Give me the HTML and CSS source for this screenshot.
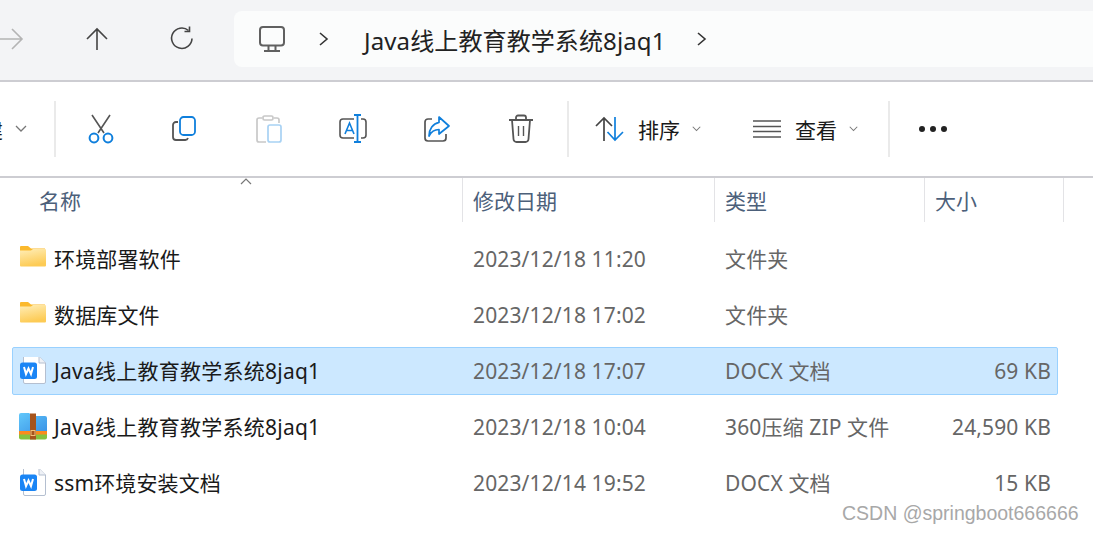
FILE: index.html
```html
<!DOCTYPE html>
<html lang="zh-CN">
<head>
  <meta charset="UTF-8">
  <meta name="viewport" content="width=device-width, initial-scale=1.0">
  <title>Java线上教育教学系统8jaq1</title>
  <link rel="stylesheet" href="styles.css">
</head>
<body>
  <!-- 地址栏 -->
  <div class="nav-bar">
    <div class="nav-btns">
      <button class="nav-btn">
        <svg width="32" height="32" viewBox="0 0 32 32" fill="none" stroke="#b4b4b4" stroke-width="1.6"><path d="M4 16H25M16 6L26 16L16 26"/></svg>
      </button>
      <button class="nav-btn">
        <svg width="32" height="32" viewBox="0 0 32 32" fill="none" stroke="#444" stroke-width="1.6"><path d="M16 27V6M6 16L16 6L26 16"/></svg>
      </button>
      <button class="nav-btn">
        <svg width="32" height="32" viewBox="0 0 32 32" fill="none" stroke="#444" stroke-width="1.6"><path d="M22.5 7.5A10.2 10.2 0 1 0 26 15.5"/><path d="M23.5 3.5V8.5H18.5"/></svg>
      </button>
    </div>
    <div class="address">
      <svg class="addr-pc" width="28" height="28" viewBox="0 0 28 28" fill="none" stroke="#606060" stroke-width="2"><rect x="2" y="2" width="24" height="18.5" rx="3"/><path d="M10.5 21V25M17.5 21V25M6 26H22"/></svg>
      <svg class="addr-chev" width="12" height="16" viewBox="0 0 12 16" fill="none" stroke="#333" stroke-width="1.6"><path d="M2 2L9 8L2 14"/></svg>
      <span class="addr-text">Java线上教育教学系统8jaq1</span>
      <svg class="addr-chev2" width="12" height="16" viewBox="0 0 12 16" fill="none" stroke="#333" stroke-width="1.6"><path d="M2 2L9 8L2 14"/></svg>
    </div>
  </div>

  <!-- 工具栏 -->
  <div class="toolbar">
    <div class="tb-new">
      <span class="tb-new-text">新建</span>
      <svg class="chev" width="12" height="8" viewBox="0 0 12 8" fill="none" stroke="#777" stroke-width="1.3"><path d="M1 1L6 6L11 1"/></svg>
    </div>
    <div class="sep"></div>
    <div class="tb-icons">
      <button class="tb-btn">
        <svg width="30" height="32" viewBox="0 0 30 32" fill="none" stroke-width="2"><path d="M6 2L18 20M24 2L12 20" stroke="#555" stroke-width="1.6"/><circle cx="8" cy="25" r="4.4" stroke="#0f7fdc"/><circle cx="22" cy="25" r="4.4" stroke="#0f7fdc"/></svg>
      </button>
      <button class="tb-btn">
        <svg width="28" height="28" viewBox="0 0 28 28" fill="none" stroke-width="1.8"><path d="M7 7H5A3 3 0 0 0 2 10V22A3 3 0 0 0 5 25H14A3 3 0 0 0 17 23" stroke="#555"/><rect x="9" y="2" width="15" height="18" rx="3.5" stroke="#0f7fdc"/></svg>
      </button>
      <button class="tb-btn">
        <svg width="28" height="30" viewBox="0 0 28 30" fill="none" stroke-width="1.7"><path d="M7 4H4A2 2 0 0 0 2 6V26A2 2 0 0 0 4 28H11M19 4H22A2 2 0 0 1 24 6V9" stroke="#c8c8c8"/><rect x="8" y="2" width="10" height="4" rx="1.5" stroke="#c8c8c8"/><rect x="13" y="11" width="13" height="17" rx="2" stroke="#a8d2f4"/></svg>
      </button>
      <button class="tb-btn">
        <svg width="30" height="30" viewBox="0 0 30 30" fill="none" stroke-width="1.6"><path d="M16 5H5A3 3 0 0 0 2 8V21A3 3 0 0 0 5 24H16M23 5H25A3 3 0 0 1 28 8V21A3 3 0 0 1 25 24H23" stroke="#555"/><path d="M7 20L11.5 9L16 20M8.6 16.5H14.4" stroke="#0f7fdc"/><path d="M16 1H23M19.5 1V28M16 28H23" stroke="#0f7fdc" stroke-width="1.8"/></svg>
      </button>
      <button class="tb-btn">
        <svg width="28" height="28" viewBox="0 0 28 28" fill="none" stroke-width="1.7"><path d="M9 4H5A3 3 0 0 0 2 7V23A3 3 0 0 0 5 26H20A3 3 0 0 0 23 23V19" stroke="#555"/><path d="M16 2L26 11L16 19V14.5C11 14.5 8 17 6 21C6 14 10 8.5 16 7.5Z" stroke="#0f7fdc" stroke-linejoin="round"/></svg>
      </button>
      <button class="tb-btn">
        <svg width="26" height="30" viewBox="0 0 26 30" fill="none" stroke="#555" stroke-width="1.8"><path d="M1 6H25M8 5V3.5A2 2 0 0 1 10 1.5H16A2 2 0 0 1 18 3.5V5"/><path d="M4 6L5.5 25A3 3 0 0 0 8.5 28H17.5A3 3 0 0 0 20.5 25L22 6"/><path d="M10.5 12V22M15.5 12V22" stroke-width="1.4"/></svg>
      </button>
    </div>
    <div class="sep"></div>
    <div class="tb-menu tb-sort">
      <svg width="30" height="26" viewBox="0 0 30 26" fill="none" stroke-width="1.7"><path d="M9 25V2M1 10L9 2L17 10" stroke="#444"/><path d="M20 1V24M12.5 16L20 24L28 16" stroke="#0f7fdc"/></svg>
      <span>排序</span>
      <svg class="chev" width="9" height="6" viewBox="0 0 12 8" fill="none" stroke="#777" stroke-width="1.4"><path d="M1 1L6 6L11 1"/></svg>
    </div>
    <div class="tb-menu tb-view">
      <svg width="28" height="20" viewBox="0 0 28 20" fill="none" stroke="#555" stroke-width="1.7"><path d="M0 2H28M0 7.5H28M0 12.5H28M0 18H28"/></svg>
      <span>查看</span>
      <svg class="chev" width="9" height="6" viewBox="0 0 12 8" fill="none" stroke="#777" stroke-width="1.4"><path d="M1 1L6 6L11 1"/></svg>
    </div>
    <div class="sep"></div>
    <div class="tb-more"><i></i><i></i><i></i></div>
  </div>

  <!-- 文件列表 -->
  <div class="list-head">
    <div class="col-name">名称<svg class="sort-caret" width="12" height="7" viewBox="0 0 12 7" fill="none" stroke="#777" stroke-width="1.2"><path d="M1 6L6 1L11 6"/></svg></div>
    <div class="col">修改日期</div>
    <div class="col">类型</div>
    <div class="col">大小</div>
  </div>

  <div class="rows">
    <div class="row">
      <div class="name">
        <svg class="icon" width="28" height="28" viewBox="0 0 28 28"><use href="#folder"/></svg>
        <span>环境部署软件</span>
      </div>
      <div class="cell">2023/12/18 11:20</div>
      <div class="cell type">文件夹</div>
      <div class="size"></div>
    </div>
    <div class="row">
      <div class="name">
        <svg class="icon" width="28" height="28" viewBox="0 0 28 28"><use href="#folder"/></svg>
        <span>数据库文件</span>
      </div>
      <div class="cell">2023/12/18 17:02</div>
      <div class="cell type">文件夹</div>
      <div class="size"></div>
    </div>
    <div class="row selected">
      <div class="name">
        <svg class="icon" width="28" height="28" viewBox="0 0 28 28"><use href="#word"/></svg>
        <span class="wide">Java线上教育教学系统8jaq1</span>
      </div>
      <div class="cell">2023/12/18 17:07</div>
      <div class="cell type">DOCX 文档</div>
      <div class="size">69 KB</div>
    </div>
    <div class="row">
      <div class="name">
        <svg class="icon" width="28" height="28" viewBox="0 0 28 28"><use href="#zip"/></svg>
        <span class="wide">Java线上教育教学系统8jaq1</span>
      </div>
      <div class="cell">2023/12/18 10:04</div>
      <div class="cell type">360压缩 ZIP 文件</div>
      <div class="size">24,590 KB</div>
    </div>
    <div class="row">
      <div class="name">
        <svg class="icon" width="28" height="28" viewBox="0 0 28 28"><use href="#word"/></svg>
        <span>ssm环境安装文档</span>
      </div>
      <div class="cell">2023/12/14 19:52</div>
      <div class="cell type">DOCX 文档</div>
      <div class="size">15 KB</div>
    </div>
  </div>

  <div class="watermark">CSDN @springboot666666</div>

  <!-- 图标 -->
  <svg class="defs" width="0" height="0">
    <defs>
      <linearGradient id="fold" x1="0" y1="0" x2="0.3" y2="1"><stop offset="0" stop-color="#ffeeb8"/><stop offset="1" stop-color="#fdcb55"/></linearGradient>
      <linearGradient id="zipb" x1="0" y1="0" x2="1" y2="1"><stop offset="0" stop-color="#62c8fb"/><stop offset="1" stop-color="#3a93e6"/></linearGradient>
      <symbol id="folder" viewBox="0 2.5 28 28">
        <path d="M1 4.5A1 1 0 0 1 2 3.5H9L12 6H26V9H1Z" fill="#fbb92d"/>
        <path d="M1 8L12 8L14 6.5H26A1 1 0 0 1 27 7.5V23A1 1 0 0 1 26 24H2A1 1 0 0 1 1 23Z" fill="url(#fold)"/>
      </symbol>
      <symbol id="word" viewBox="0 1 28 28">
        <path d="M4.5 0.5H20L26.5 7V26A1.5 1.5 0 0 1 25 27.5H6A1.5 1.5 0 0 1 4.5 26Z" fill="#fff" stroke="#b4bfd0"/>
        <path d="M20 0.5V7H26.5" fill="#eef1f6" stroke="#b4bfd0"/>
        <rect x="1" y="6.5" width="17" height="16.5" rx="2.5" fill="#1a85f5"/>
        <path d="M5 11L7 18L9.5 12.5L12 18L14 11" fill="none" stroke="#fff" stroke-width="2"/>
      </symbol>
      <symbol id="zip" viewBox="0 1 28 28">
        <path d="M0 3A2 2 0 0 1 2 1H10L14 4H26A2 2 0 0 1 28 6V20H0Z" fill="url(#zipb)"/>
        <rect x="0" y="19" width="28" height="4" fill="#fb8a1d"/>
        <path d="M0 22.5H28V25.5A2 2 0 0 1 26 27.5H2A2 2 0 0 1 0 25.5Z" fill="#86c23f"/>
        <rect x="11" y="1.5" width="6" height="26" fill="#a6541c"/>
        <rect x="12" y="18.5" width="4" height="5" fill="none" stroke="#f2c07a"/>
      </symbol>
    </defs>
  </svg>
</body>
</html>
```

FILE: styles.css
```css
* { box-sizing: border-box; }
html, body {
  margin: 0;
  height: 533px;
  overflow: hidden;
}
body {
  position: relative;
  background: #fff;
  color: #1a1a1a;
  font-family: "Noto Sans", "Noto Sans CJK SC", sans-serif;
  font-size: 21px;
}
button {
  background: none;
  border: none;
  padding: 0;
}
.defs { position: absolute; }

.nav-bar {
  display: flex;
  height: 82px;
  padding-top: 11px;
  background: #f3f4f6;
  border-bottom: 2px solid #cdcdd2;
}
.nav-btns {
  display: flex;
  margin-left: -31px;
  margin-right: 10px;
  height: 56px;
}
.nav-btn {
  display: flex;
  align-items: center;
  justify-content: center;
  width: 85px;
}
.address {
  flex: 1;
  display: flex;
  align-items: center;
  height: 56px;
  padding-left: 24px;
  background: #fbfcfc;
  border-radius: 8px 0 0 8px;
}
.addr-chev { margin-left: 32px; }
.addr-text {
  margin-left: 34px;
  font-size: 24px;
  letter-spacing: 0.12px;
  color: #222;
}
.addr-chev2 { margin-left: 30px; }

.toolbar {
  display: flex;
  align-items: center;
  height: 96px;
  border-bottom: 2px solid #cdcdd2;
  font-size: 21px;
}
.tb-new {
  display: flex;
  align-items: center;
  width: 54px;
  overflow: hidden;
}
.tb-new-text {
  flex: none;
  margin-left: -39px;
  margin-right: 12px;
}
.tb-new .chev { flex: none; }
.sep {
  flex: none;
  width: 2px;
  height: 56px;
  background: #eaeaea;
}
.tb-icons {
  display: flex;
  padding-left: 3px;
  width: 511px;
}
.tb-btn {
  display: flex;
  align-items: center;
  justify-content: center;
  width: 84px;
  height: 56px;
}
.tb-menu {
  display: flex;
  align-items: center;
}
.tb-menu span { margin-left: 13px; }
.tb-menu .chev { margin-left: 12px; }
.tb-sort { margin-left: 26px; }
.tb-view { margin-left: 52px; }
.tb-view span { margin-left: 14px; }
.tb-view + .sep { margin-left: 30px; }
.tb-more {
  display: flex;
  gap: 5px;
  margin-left: 29px;
}
.tb-more i {
  width: 6px;
  height: 6px;
  border-radius: 50%;
  background: #222;
}

.list-head {
  position: relative;
  display: grid;
  grid-template-columns: 462px 252px 210px 140px;
  height: 44px;
  color: #4c607a;
  font-size: 21px;
}
.col-name {
  display: flex;
  align-items: center;
  padding-left: 39px;
}
.col {
  display: flex;
  align-items: center;
  padding-left: 10px;
  border-left: 1px solid #e3e3e6;
}
.col:last-child { border-right: 1px solid #e3e3e6; }
.sort-caret {
  position: absolute;
  left: 240px;
  top: 0;
}

.rows {
  display: flex;
  flex-direction: column;
  gap: 8px;
  margin: 13px 0 0 12px;
  width: 1046px;
  letter-spacing: 0.13px;
}
.row {
  display: grid;
  grid-template-columns: 450px 252px 210px 134px;
  align-items: center;
  height: 48px;
  border: 1px solid transparent;
  border-radius: 2px;
  color: #666;
}
.row.selected {
  background: #cce8ff;
  border-color: #99d1ff;
}
.name {
  display: flex;
  align-items: center;
  padding-left: 6px;
  color: #1a1a1a;
}
.name span { padding-bottom: 2px; }
.name .wide { letter-spacing: 0.25px; }
.icon {
  flex: none;
  margin-right: 7px;
}
.cell { padding-left: 10px; }
.type { padding-bottom: 2px; }
.size {
  padding-right: 8px;
  text-align: right;
}

.watermark {
  position: absolute;
  left: 842px;
  top: 502px;
  font-family: "Liberation Sans", sans-serif;
  font-size: 19.5px;
  color: #a8a8a8;
  background: rgba(255,255,255,0.6);
}
```
